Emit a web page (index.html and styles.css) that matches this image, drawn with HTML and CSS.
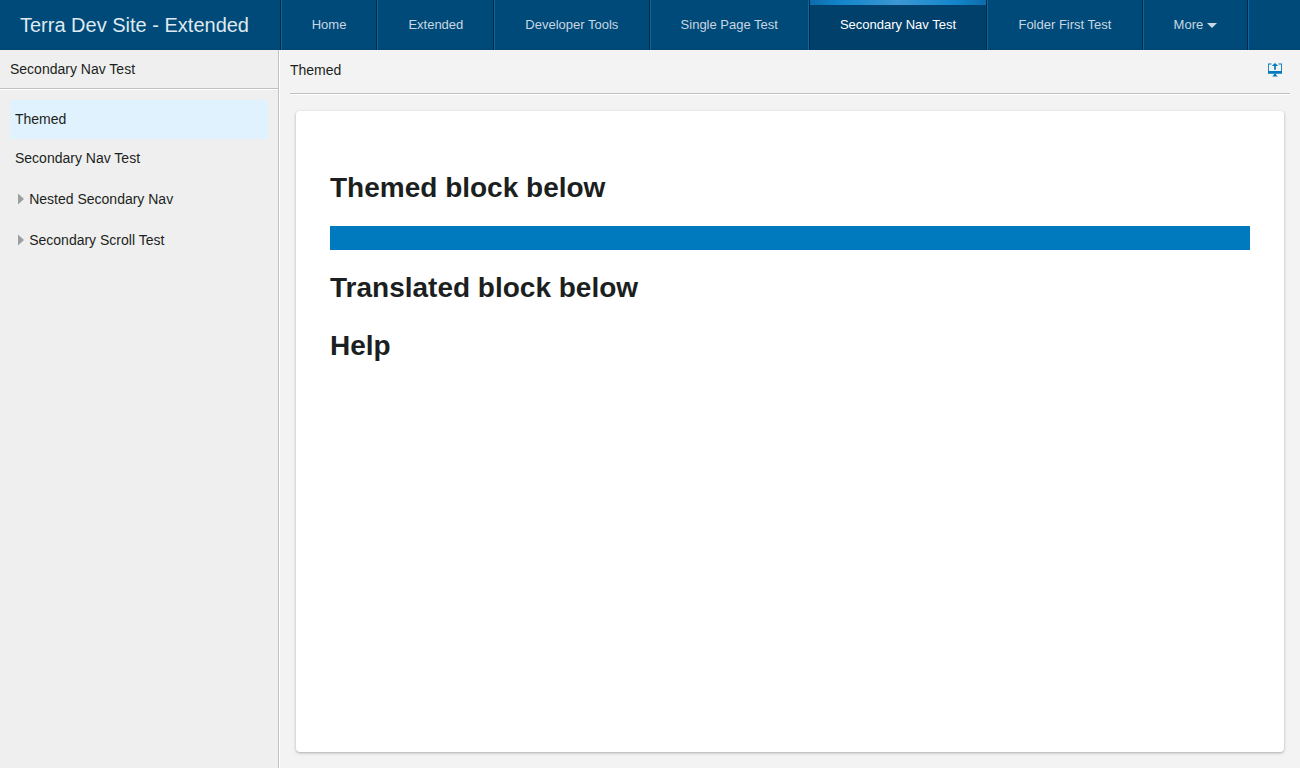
FILE: index.html
```html
<!DOCTYPE html>
<html lang="en">
<head>
<meta charset="utf-8">
<title>Terra Dev Site - Extended</title>
<link rel="stylesheet" href="styles.css">
</head>
<body>
<header class="header">
  <div class="brand">Terra Dev Site - Extended</div>
  <nav class="tabs">
    <a class="tab">Home</a>
    <a class="tab">Extended</a>
    <a class="tab tools">Developer Tools</a>
    <a class="tab before-active">Single Page Test</a>
    <a class="tab active">Secondary Nav Test</a>
    <a class="tab after-active">Folder First Test</a>
    <a class="tab">More<svg class="caret" width="10" height="5" viewBox="0 0 10 5"><path d="M0 0h10L5 5z"/></svg></a>
  </nav>
</header>
<div class="body">
  <aside class="sidebar">
    <div class="side-header">Secondary Nav Test</div>
    <div class="menu">
      <a class="item selected">Themed</a>
      <a class="item">Secondary Nav Test</a>
      <a class="item folder"><svg class="arrow" width="6" height="12" viewBox="0 0 6 12"><path d="M0 .5l6 5.5-6 5.5z"/></svg>Nested Secondary Nav</a>
      <a class="item folder"><svg class="arrow" width="6" height="12" viewBox="0 0 6 12"><path d="M0 .5l6 5.5-6 5.5z"/></svg>Secondary Scroll Test</a>
    </div>
  </aside>
  <main class="main">
    <div class="toolbar">
      <span>Themed</span>
      <svg class="launch" width="14" height="14" viewBox="0 0 48 48"><path d="M0 2h12v3H3v22h42V5H36V2h12v35H0z"/><path d="M24 0l11 10h-8v13h-6V10h-8zM20 37h8v4l6 5H14l6-5z"/></svg>
    </div>
    <section class="card">
      <h1>Themed block below</h1>
      <div class="block"></div>
      <h1>Translated block below</h1>
      <h1>Help</h1>
    </section>
  </main>
</div>
</body>
</html>
```
FILE: styles.css
```css
* { box-sizing: border-box; }
body {
  margin: 0;
  height: 768px;
  display: flex;
  flex-direction: column;
  overflow: hidden;
  font: 14px/20px "Liberation Sans", Arial, sans-serif;
  color: #1c1f21;
  background: #f3f3f3;
}
.header {
  height: 50px;
  flex: none;
  display: flex;
  color: #c8d7e1;
  background: #004c7b linear-gradient(#004a79 46px, #004674);
}
.brand {
  width: 280.7px;
  flex: none;
  padding-left: 20px;
  border-right: 1px solid #002a45;
  font-size: 20px;
  line-height: 50px;
  color: #dfe9ef;
}
.tabs { display: flex; font-size: 13px; }
.tab {
  padding: 0 30px;
  border-left: 1px solid #136496;
  border-right: 1px solid #002a45;
  line-height: 49px;
  white-space: nowrap;
}
.tools { padding-right: 30.3px; }
.before-active { border-right-color: #0c68a5; }
.active {
  border-left-color: #002a45;
  color: #fff;
  background: linear-gradient(90deg, #0d6cab, #1486cc 18%, #3c97d3 50%, #1486cc 82%, #0d6cab) 0 0 / 100% 5px no-repeat, #00406b;
}
.after-active { padding: 0 30.2px 0 30.4px; }
.tab:last-child { padding-right: 30.4px; box-shadow: 1px 0 #0c68a5; }
.caret { margin: 0 0 1px 3.4px; fill: #c8d7e1; }
.body { flex: 1; display: flex; min-height: 0; }
.sidebar {
  width: 279px;
  flex: none;
  background: #efefef;
  border-right: 1px solid #bfc2c3;
}
.side-header {
  height: 39px;
  padding-left: 10px;
  line-height: 38px;
  border-bottom: 1px solid #bfc2c3;
  box-shadow: 0 1px #fff;
}
.menu { padding: 11px 10px 0; }
.item {
  display: flex;
  align-items: center;
  height: 39px;
  padding: 0 0 2px 5px;
  border-radius: 2px;
}
.selected { background: #e0f2fd; }
.folder { height: 41px; padding: 0 0 0 7.5px; }
.arrow { margin: 0 5.7px 0 0; fill: #9b9fa1; }
.main {
  flex: 1;
  display: flex;
  flex-direction: column;
  padding: 0 10px 0 11px;
  box-shadow: inset 1px 0 #fff;
}
.toolbar {
  height: 44px;
  flex: none;
  display: flex;
  justify-content: space-between;
  align-items: center;
  padding: 0 8px 3px 0;
  border-bottom: 1px solid #bfc2c3;
  box-shadow: 0 1px #fff;
}
.launch { fill: #0079be; }
.card {
  flex: 1;
  margin: 17px 6px 16px;
  padding: 60px 34px 0;
  background: #fff;
  border-radius: 4px;
  box-shadow: 0 1px 3px rgba(0, 0, 0, .3);
}
h1 { margin: 0 0 24px; font-size: 28px; line-height: 34px; }
.block { height: 24px; margin: -3px 0 21px; background: #007abf; }
```
